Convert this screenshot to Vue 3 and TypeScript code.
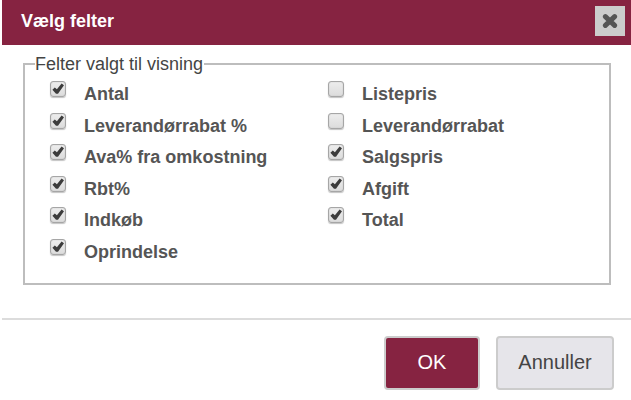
<script setup lang="ts">
import { reactive, ref } from 'vue'

interface Field {
  id: string
  label: string
  checked: boolean
}

const fields = reactive<Field[]>([
  { id: 'antal', label: 'Antal', checked: true },
  { id: 'listepris', label: 'Listepris', checked: false },
  { id: 'leverandorrabat-pct', label: 'Leverandørrabat %', checked: true },
  { id: 'leverandorrabat', label: 'Leverandørrabat', checked: false },
  { id: 'ava', label: 'Ava% fra omkostning', checked: true },
  { id: 'salgspris', label: 'Salgspris', checked: true },
  { id: 'rbt', label: 'Rbt%', checked: true },
  { id: 'afgift', label: 'Afgift', checked: true },
  { id: 'indkob', label: 'Indkøb', checked: true },
  { id: 'total', label: 'Total', checked: true },
  { id: 'oprindelse', label: 'Oprindelse', checked: true },
])

const open = ref(true)
const close = () => {
  open.value = false
}
</script>

<template>
  <form v-if="open" class="dialog" @submit.prevent="close">
    <header class="header">
      <h1 class="title">Vælg felter</h1>
      <button class="close" type="button" aria-label="Luk" @click="close">
        <svg viewBox="0 0 16 16" width="16" height="16" aria-hidden="true">
          <path d="M3.4 3.6L12.6 12.4M12.6 3.6L3.4 12.4" />
        </svg>
      </button>
    </header>

    <main class="body">
      <fieldset class="fields">
        <legend>Felter valgt til visning</legend>
        <div class="grid">
          <div v-for="field in fields" :key="field.id" class="row">
            <span class="box">
              <input :id="field.id" v-model="field.checked" type="checkbox" />
              <svg class="tick" viewBox="0 0 16 16" aria-hidden="true">
                <path d="M2.4 8.7L4.8 6.4L6.9 8.3L11.6 2.4L14 4.2L8 12.8H6Z" />
              </svg>
            </span>
            <label :for="field.id">{{ field.label }}</label>
          </div>
        </div>
      </fieldset>
    </main>

    <footer class="footer">
      <button class="button primary" type="submit">OK</button>
      <button class="button" type="button" @click="close">Annuller</button>
    </footer>
  </form>
</template>

<style>
body {
  background: #fff;
}
</style>

<style scoped>
.dialog {
  margin-left: 2px;
  font-family: 'Liberation Sans', Arial, sans-serif;
  color: #444;
}

.header {
  display: flex;
  align-items: center;
  justify-content: space-between;
  height: 45px;
  padding: 0 6px 0 19px;
  box-sizing: border-box;
  background: #862341;
}

.title {
  margin: 0;
  padding-bottom: 4px;
  font-size: 18px;
  line-height: 22px;
  color: #fff;
}

.close {
  display: grid;
  place-items: center;
  width: 30px;
  height: 30px;
  margin-bottom: 3px;
  padding: 0;
  border: 0;
  background: #ccc;
}

.close svg {
  fill: none;
  stroke: #555;
  stroke-width: 5;
  stroke-linecap: round;
}

.body {
  padding: 8px 20px 33px 21px;
}

.fields {
  min-width: 0;
  margin: 0;
  padding: 0 25px 19px;
  border: 2px solid #bdbdbd;
}

legend {
  margin-left: -15px;
  padding: 0 1px 0 0;
  font-size: 18px;
  line-height: 22px;
}

.grid {
  display: grid;
  grid-template-columns: 278px 1fr;
  grid-auto-rows: 32px 31px;
}

.row {
  display: flex;
  align-items: flex-start;
  gap: 18px;
  padding-top: 6px;
}

.row label {
  padding-top: 2px;
  font-size: 18px;
  font-weight: bold;
  line-height: 22px;
  color: #555;
}

.box {
  display: grid;
  width: 16px;
  height: 16px;
}

.box > * {
  grid-area: 1 / 1;
}

.box input {
  appearance: none;
  width: 16px;
  height: 16px;
  margin: 0;
  box-sizing: border-box;
  border: 1px solid #a6a6a6;
  border-radius: 3px;
  background: linear-gradient(#ededed, #dcdcdc);
  box-shadow: 0 1px 1px #c4c4c4, inset 0 0 1px #a6a6a6;
}

.tick {
  width: 16px;
  height: 16px;
  fill: #3c3c3c;
  pointer-events: none;
  visibility: hidden;
}

.box input:checked + .tick {
  visibility: visible;
}

.footer {
  display: flex;
  justify-content: flex-end;
  gap: 16px;
  padding: 16px 17px 10px;
  border-top: 2px solid #dcdcdc;
}

.button {
  min-width: 118px;
  height: 54px;
  padding: 0 20px 2px;
  border: 2px solid #ccc;
  border-radius: 4px;
  background: #e6e5ea;
  font-family: inherit;
  font-size: 20px;
  color: #444;
}

.primary {
  min-width: 96px;
  background: #862341;
  color: #fff;
}
</style>
